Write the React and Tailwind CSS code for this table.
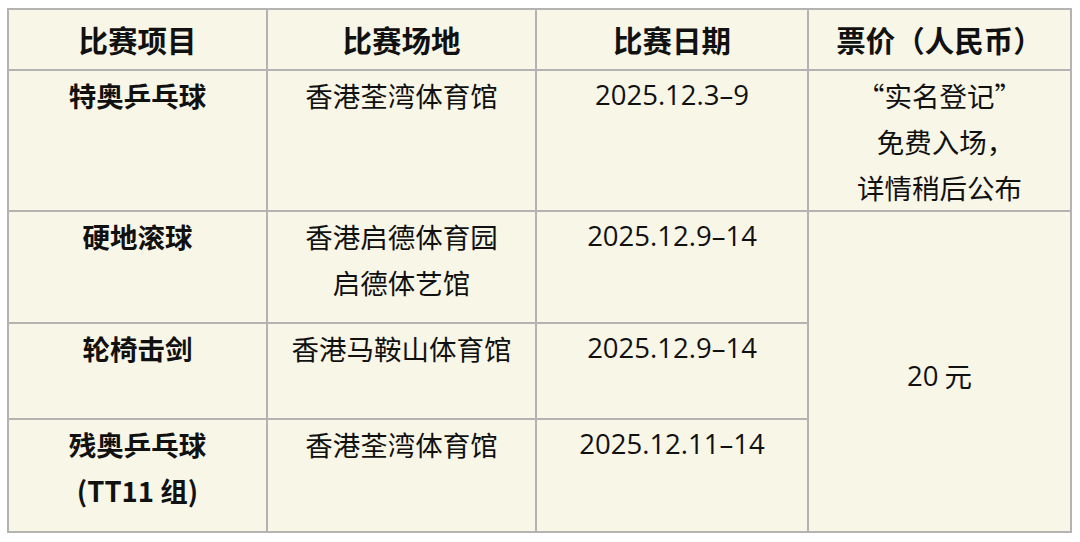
import React from 'react'

const rows = [
  { name: ['特奥乒乓球'], venue: ['香港荃湾体育馆'], date: '2025.12.3–9' },
  { name: ['硬地滚球'], venue: ['香港启德体育园', '启德体艺馆'], date: '2025.12.9–14' },
  { name: ['轮椅击剑'], venue: ['香港马鞍山体育馆'], date: '2025.12.9–14' },
  { name: ['残奥乒乓球', '(TT11 组)'], venue: ['香港荃湾体育馆'], date: '2025.12.11–14' },
]

const cell = 'bg-[#f8f6e7] flex flex-col items-center text-center pt-[1px] leading-[46px] text-[27.5px]'

const Lines = ({ items }) => items.map((t) => <span key={t}>{t}</span>)

export default function App() {
  return (
    <div className="w-[1080px] h-[542px] bg-white pt-[8px] pl-[7px] font-['Noto_Sans_CJK_SC',sans-serif] text-[#111]">
      <div className="grid w-fit grid-cols-[257px_267px_270px_261px] grid-rows-[59px_139px_110px_94px_111px] gap-[2px] bg-[#b3b3b1] p-[2px]">
        {['比赛项目', '比赛场地', '比赛日期', '票价（人民币）'].map((h) => (
          <div key={h} className="bg-[#f8f6e7] flex items-center justify-center text-[29.5px] font-bold">
            {h}
          </div>
        ))}

        {rows.map((r, i) => (
          <React.Fragment key={i}>
            <div className={`${cell} font-bold`}>
              <Lines items={r.name} />
            </div>
            <div className={cell}>
              <Lines items={r.venue} />
            </div>
            <div className={`${cell} font-['Open_Sans',sans-serif]`}>{r.date}</div>
            {i === 0 && (
              <div className={cell}>
                <span>“实名登记”</span>
                <span className="pl-[12px]">免费入场，</span>
                <span>详情稍后公布</span>
              </div>
            )}
            {i === 1 && (
              <div className="bg-[#f8f6e7] row-span-3 flex items-center justify-center pt-[8px] text-[27.5px]">
                <span className="font-['Open_Sans',sans-serif]">20</span>&nbsp;元
              </div>
            )}
          </React.Fragment>
        ))}
      </div>
    </div>
  )
}
